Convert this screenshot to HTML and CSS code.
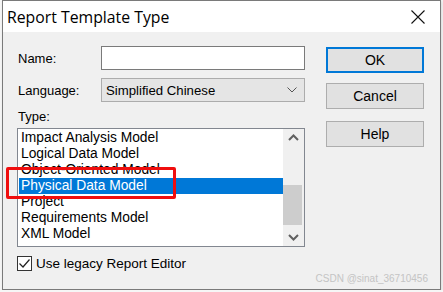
FILE: index.html
```html
<!DOCTYPE html>
<html>
<head>
    <title>Report Template Type</title>
    <meta charset="utf-8">
    <link rel="stylesheet" href="styles.css">
</head>
<body>
    <div class="window">
        <div class="titlebar">
            <span class="title">Report Template Type</span>
            <svg class="close" width="14" height="14" viewBox="0 0 14 14">
                <path d="M0.5 0.5 L13.5 13.5 M13.5 0.5 L0.5 13.5" stroke="#111" stroke-width="1.1" fill="none"/>
            </svg>
        </div>

        <div class="dialog">
            <div class="form">
                <div class="row">
                    <div class="label">Name:</div>
                    <div class="textbox"></div>
                </div>
                <div class="row">
                    <div class="label">Language:</div>
                    <div class="combo">
                        <span>Simplified Chinese</span>
                        <svg width="10" height="6" viewBox="0 0 10 6">
                            <path d="M0.5 0.5 L5 5 L9.5 0.5" stroke="#555" stroke-width="1" fill="none"/>
                        </svg>
                    </div>
                </div>
                <div class="label type-label">Type:</div>

                <div class="listbox">
                    <div class="items">
                        <div class="item">Impact Analysis Model</div>
                        <div class="item">Logical Data Model</div>
                        <div class="item">Object-Oriented Model</div>
                        <div class="item selected">Physical Data Model</div>
                        <div class="item">Project</div>
                        <div class="item">Requirements Model</div>
                        <div class="item">XML Model</div>
                    </div>
                    <div class="scrollbar">
                        <div class="arrow">
                            <svg width="11" height="7" viewBox="0 0 11 7">
                                <path d="M1 6 L5.5 1.5 L10 6" stroke="#606060" stroke-width="2" fill="none"/>
                            </svg>
                        </div>
                        <div class="track">
                            <div class="thumb"></div>
                        </div>
                        <div class="arrow">
                            <svg width="11" height="7" viewBox="0 0 11 7">
                                <path d="M1 1 L5.5 5.5 L10 1" stroke="#606060" stroke-width="2" fill="none"/>
                            </svg>
                        </div>
                    </div>
                    <!-- evidenziazione -->
                    <div class="highlight"></div>
                </div>

                <div class="check-row">
                    <div class="checkbox">
                        <svg width="13" height="13" viewBox="0 0 13 13">
                            <path d="M1.5 6.5 L5 10 L11.5 2.5" stroke="#222" stroke-width="1.2" fill="none"/>
                        </svg>
                    </div>
                    <span>Use legacy Report Editor</span>
                </div>
            </div>

            <div class="buttons">
                <div class="btn default">OK</div>
                <div class="btn">Cancel</div>
                <div class="btn help">Help</div>
            </div>
        </div>
        <div class="watermark">CSDN @sinat_36710456</div>
    </div>
</body>
</html>
```

FILE: styles.css
```css
body {
    margin: 0;
    padding: 0 0 0 2px;
    background: #f6f6f6;
    font-family: 'Liberation Sans', Arial, sans-serif;
    font-size: 13px;
    color: #000;
}
.window {
    position: relative;
    width: 437px;
    height: 288px;
    border: 1px solid #7a7a7a;
    background: #f0f0f0;
    box-shadow: 1px 1px 3px rgba(0,0,0,0.12);
}
.titlebar {
    height: 31px;
    background: #fff;
    display: flex;
    align-items: center;
    justify-content: space-between;
    padding: 0 15px 0 4px;
}
.title {
    font-family: 'Open Sans', 'Noto Sans', sans-serif;
    font-size: 15.8px;
    color: #000;
}
.close {
    display: block;
}
.dialog {
    display: grid;
    grid-template-columns: 288px 98px;
    column-gap: 21px;
    padding: 14px 0 0 14px;
}
.row {
    display: flex;
    align-items: center;
    height: 24px;
    margin-bottom: 8px;
}
.label {
    width: 84px;
    padding-left: 1px;
    box-sizing: border-box;
}
.textbox {
    width: 204px;
    height: 24px;
    box-sizing: border-box;
    background: #fff;
    border: 1px solid #7a7a7a;
}
.combo {
    width: 204px;
    height: 24px;
    box-sizing: border-box;
    background: #e5e5e5;
    border: 1px solid #acacac;
    display: flex;
    align-items: center;
    justify-content: space-between;
    padding: 0 7px 0 4px;
    font-size: 13.2px;
}
.type-label {
    height: 16px;
    line-height: 16px;
    margin: -1px 0 3px 0;
}
.listbox {
    position: relative;
    display: flex;
    height: 119px;
    box-sizing: border-box;
    border: 1px solid #828790;
    background: #fff;
}
.items {
    flex: 1;
    padding: 1px 0 0 1px;
    position: relative;
    z-index: 1;
}
.item {
    height: 16px;
    line-height: 16px;
    padding-left: 2px;
    font-size: 13.8px;
    white-space: nowrap;
}
.item.selected {
    background: #0078d7;
    color: #fff;
}
.scrollbar {
    width: 21px;
    background: #f0f0f0;
    display: flex;
    flex-direction: column;
}
.arrow {
    height: 17px;
    display: flex;
    align-items: center;
    justify-content: center;
}
.track {
    flex: 1;
}
.thumb {
    width: 19px;
    height: 40px;
    margin-top: 39px;
    background: #cdcdcd;
}
.highlight {
    position: absolute;
    left: -12px;
    top: 38px;
    width: 164px;
    height: 26px;
    border: 3px solid #f00e0e;
    border-radius: 2px;
    z-index: 2;
}
.check-row {
    display: flex;
    align-items: center;
    margin-top: 9px;
    font-size: 13.5px;
}
.checkbox {
    width: 13px;
    height: 13px;
    border: 1px solid #333;
    background: #fff;
    margin-right: 4px;
}
.checkbox svg {
    display: block;
}
.buttons {
    display: flex;
    flex-direction: column;
    padding-top: 1px;
}
.btn {
    height: 24px;
    line-height: 24px;
    text-align: center;
    background: #e1e1e1;
    border: 1px solid #adadad;
    margin-bottom: 10px;
    font-size: 14px;
}
.btn.default {
    height: 22px;
    line-height: 22px;
    border: 2px solid #0078d7;
}
.btn.help {
    margin-top: 2px;
}
.watermark {
    position: absolute;
    right: 12px;
    bottom: 5px;
    font-size: 10px;
    color: #c4c4c4;
}
```
